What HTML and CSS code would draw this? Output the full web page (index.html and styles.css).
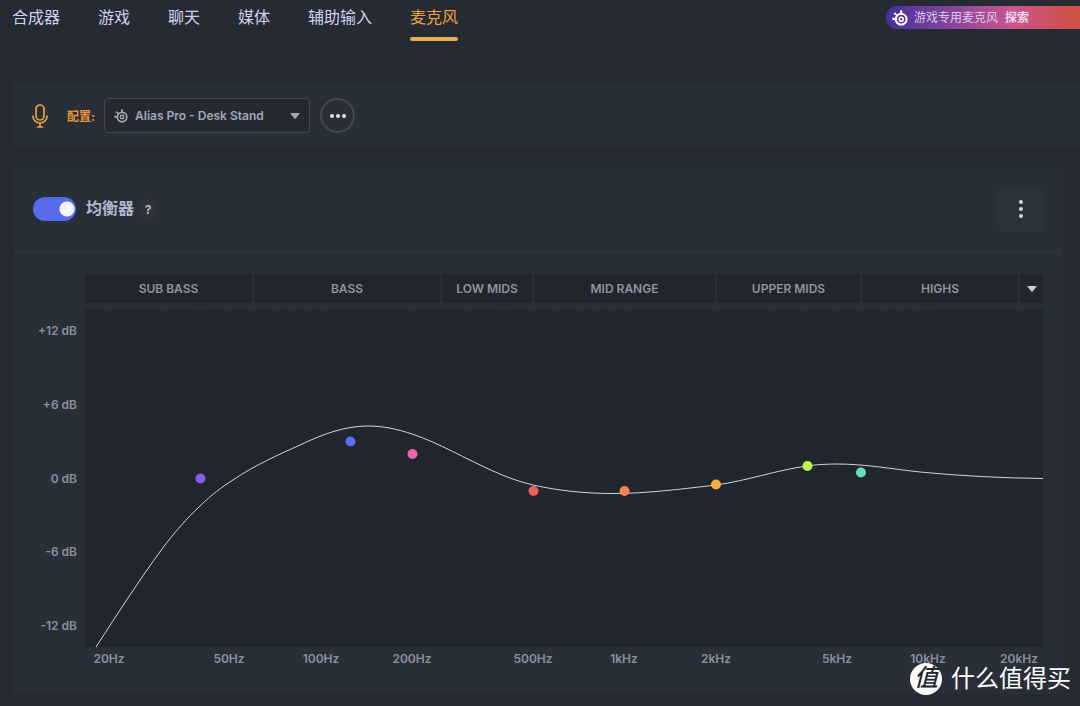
FILE: index.html
```html
<!DOCTYPE html>
<html lang="zh-CN">
<head>
<meta charset="utf-8">
<title>麦克风</title>
<link rel="stylesheet" href="styles.css">
</head>
<body>
<svg class="defs" aria-hidden="true">
  <symbol id="brand" viewBox="0 0 16 16">
    <circle cx="9.200" cy="9.200" r="5.400" fill="none" stroke="currentColor" stroke-width="2"/>
    <circle cx="9.200" cy="9.200" r="2" fill="none" stroke="currentColor" stroke-width="1.600"/>
    <path d="M9.200 4V1.500M5 5.400 3.400 4M4 9.200H1.200" fill="none" stroke="currentColor" stroke-width="1.500" stroke-linecap="round"/>
    <circle cx="9.200" cy="1.500" r="1.200" fill="currentColor"/>
    <circle cx="2.800" cy="3.500" r="1" fill="currentColor"/>
    <circle cx="1.200" cy="8.500" r="1" fill="currentColor"/>
  </symbol>
</svg>

<header class="topbar">
  <nav class="tabs">
    <a class="tab" href="#mixer">合成器</a>
    <a class="tab" href="#game">游戏</a>
    <a class="tab" href="#chat">聊天</a>
    <a class="tab" href="#media">媒体</a>
    <a class="tab" href="#aux">辅助输入</a>
    <a class="tab tab-active" href="#mic" aria-current="page">麦克风</a>
  </nav>
  <a class="promo" href="#explore">
    <svg class="promo-icon" aria-hidden="true"><use href="#brand"/></svg>
    <span>游戏专用麦克风</span>
    <strong>探索</strong>
  </a>
</header>

<section class="profile">
  <svg class="mic" viewBox="0 0 16 24" fill="none" stroke="currentColor" stroke-width="1.700" stroke-linecap="round" aria-hidden="true">
    <rect x="4" y="1" width="8" height="15" rx="4"/>
    <path d="M1 12v.500a7 6.500 0 0 0 14 0V12M8 19v4M5.500 23h5"/>
  </svg>
  <label class="profile-label" for="preset">配置:</label>
  <div class="picker">
    <svg class="picker-icon" aria-hidden="true"><use href="#brand"/></svg>
    <select class="picker-select" id="preset">
      <option>Alias Pro - Desk Stand</option>
    </select>
    <svg class="caret" viewBox="0 0 10 6" aria-hidden="true"><path d="M1 0h8q1 0 .4.800L5.700 5.400q-.7.800-1.400 0L.6.800Q0 0 1 0z" fill="currentColor"/></svg>
  </div>
  <button class="more" type="button" aria-label="更多">
    <svg class="more-dots" viewBox="0 0 16 4" fill="currentColor"><circle cx="2" cy="2" r="2"/><circle cx="8" cy="2" r="2"/><circle cx="14" cy="2" r="2"/></svg>
  </button>
</section>

<main class="card">
  <div class="card-head">
    <input class="switch" type="checkbox" id="eq" checked>
    <label class="card-title" for="eq">均衡器</label>
    <button class="help" type="button" aria-label="帮助">?</button>
    <button class="menu" type="button" aria-label="菜单">
      <svg class="menu-dots" viewBox="0 0 4 18" fill="currentColor"><circle cx="2" cy="2" r="2"/><circle cx="2" cy="9" r="2"/><circle cx="2" cy="16" r="2"/></svg>
    </button>
  </div>
  <div class="card-body">
    <div class="bands">
      <button class="band" type="button">SUB BASS</button>
      <button class="band" type="button">BASS</button>
      <button class="band" type="button">LOW MIDS</button>
      <button class="band" type="button">MID RANGE</button>
      <button class="band" type="button">UPPER MIDS</button>
      <button class="band" type="button">HIGHS</button>
      <button class="band band-toggle" type="button" aria-label="展开">
        <svg class="caret" viewBox="0 0 10 6" aria-hidden="true"><path d="M1 0h8q1 0 .4.800L5.700 5.400q-.7.800-1.400 0L.6.800Q0 0 1 0z" fill="currentColor"/></svg>
      </button>
    </div>
    <svg class="chart" viewBox="-52 0 1010 360" role="img" aria-label="均衡器曲线">
      <rect class="plot" width="958" height="337"/>
      <path class="grid" d="M0 21H958M0 94H958M0 168H958M0 242H958M0 316H958
        M24 0V337M77 0V337M115 0V337M144 0V337M169 0V337M189 0V337M206 0V337M222 0V337M236 0V337
        M327 0V337M381 0V337M419 0V337M448 0V337M472 0V337M492 0V337M510 0V337M526 0V337M540 0V337
        M631 0V337M684 0V337M722 0V337M752 0V337M776 0V337M796 0V337M814 0V337M829 0V337M843 0V337M934 0V337"/>
      <g class="axis axis-y">
        <text x="-8" y="25">+12 dB</text>
        <text x="-8" y="99">+6 dB</text>
        <text x="-8" y="173">0 dB</text>
        <text x="-8" y="246">-6 dB</text>
        <text x="-8" y="320">-12 dB</text>
      </g>
      <g class="axis axis-x">
        <text x="24" y="353">20Hz</text>
        <text x="144" y="353">50Hz</text>
        <text x="236" y="353">100Hz</text>
        <text x="327" y="353">200Hz</text>
        <text x="448" y="353">500Hz</text>
        <text x="539" y="353">1kHz</text>
        <text x="631" y="353">2kHz</text>
        <text x="752" y="353">5kHz</text>
        <text x="843" y="353">10kHz</text>
        <text x="934" y="353">20kHz</text>
      </g>
      <path class="curve" d="M11 337C33 303 55 269 77 239C89 223 102 208 115 196C126 185 137 177 148 170C170 155 193 145 215 135C238 124 260 116 283 116C298 116 312 119 327 124C354 133 381 149 408 161C421 167 435 172 448 175C475 181 501 183.500 528 183.500C562 183.500 597 179 631 175C661 171 692 160 722 156C732 154.500 742 154 752 154C780 154 807 159 835 162C876 166 917 168 958 168.500"/>
      <circle cx="115.500" cy="168.500" r="5" fill="#8a5de8"/>
      <circle cx="265.500" cy="131.500" r="5" fill="#5a6cf0"/>
      <circle cx="327.500" cy="144" r="5" fill="#ef63b1"/>
      <circle cx="448.500" cy="181" r="5" fill="#ec5f5c"/>
      <circle cx="539.500" cy="181" r="5" fill="#f38452"/>
      <circle cx="631" cy="174.500" r="5" fill="#f3ac3f"/>
      <circle cx="722.500" cy="156" r="5" fill="#bdf350"/>
      <circle cx="776" cy="162.500" r="5" fill="#67dcc1"/>
    </svg>
  </div>
</main>

<div class="watermark">
  <span class="watermark-seal">值</span>
  <span>什么值得买</span>
</div>
</body>
</html>
```

FILE: styles.css
```css
* {
  box-sizing: border-box;
}

body {
  margin: 0;
  min-height: 100vh;
  position: relative;
  background: #262a33;
  color: #d0d4e4;
  font-family: Inter, "Noto Sans CJK SC", sans-serif;
  font-size: 12px;
}

button,
select {
  font: inherit;
  color: inherit;
  margin: 0;
  padding: 0;
  border: 0;
  background: none;
}

.defs {
  display: none;
}

.topbar {
  display: flex;
  justify-content: space-between;
  align-items: flex-start;
  padding: 6px 0 0 12px;
}

.tabs {
  display: flex;
  gap: 38px;
}

.tab {
  padding-bottom: 13px;
  color: #cfd3ee;
  font-size: 16px;
  line-height: 23px;
  text-decoration: none;
}

.tab-active {
  padding-bottom: 0;
  color: #e9a241;
}

.tab-active::after {
  content: "";
  display: block;
  height: 4px;
  margin-top: 8px;
  border-radius: 2px;
  background: #e8ae55;
}

.promo {
  display: flex;
  align-items: center;
  width: 194px;
  height: 23px;
  padding-left: 6px;
  border-radius: 12px 0 0 12px;
  background: linear-gradient(90deg, #46309a, #8a469a 35%, #c9578d 65%, #d0504a 95%);
  color: #dcc8f2;
  line-height: 16px;
  text-decoration: none;
}

.promo-icon {
  width: 16px;
  height: 16px;
  margin-right: 6px;
  color: #fff;
}

.promo strong {
  margin-left: 7px;
  color: #ecd4f0;
}

.profile {
  display: flex;
  align-items: center;
  height: 63px;
  margin: 42px 0 20px 13px;
  padding-left: 19px;
  background: #292f38;
}

.mic {
  width: 16px;
  height: 24px;
  color: #e9a241;
}

.profile-label {
  margin: 0 9px 0 19px;
  color: #e9963a;
  font-weight: 700;
}

.picker {
  display: flex;
  align-items: center;
  width: 206px;
  height: 35px;
  padding: 0 9px 0 9px;
  border: 1px solid #414650;
  border-radius: 4px;
  background: #252a32;
  color: #a3a8b6;
}

.picker-icon {
  width: 14px;
  height: 14px;
  margin-right: 7px;
}

.picker-select {
  flex: 1;
  min-width: 0;
  height: 33px;
  appearance: none;
  outline: none;
  font-weight: 600;
}

.caret {
  width: 10px;
  height: 6px;
}

.more {
  display: grid;
  place-items: center;
  width: 35px;
  height: 35px;
  margin-left: 10px;
  border: 2px solid #434751;
  border-radius: 50%;
  color: #e0e3ee;
}

.more-dots {
  width: 16px;
  height: 4px;
}

.card {
  margin: 0 17px 12px 13px;
  background: #292f38;
}

.card-head {
  display: flex;
  align-items: center;
  height: 85px;
  padding: 0 20px;
  border-bottom: 1px solid #30353e;
}

.switch {
  appearance: none;
  width: 43px;
  height: 24px;
  margin: 0 10px 0 0;
  border-radius: 12px;
  background: radial-gradient(circle at 34px 12px, #f2f3fb 7px, transparent 8px), #566bea;
}

.card-title {
  padding-bottom: 4px;
  color: #b3b8cc;
  font-size: 16px;
  font-weight: 700;
}

.help {
  width: 22px;
  height: 22px;
  margin-left: 3px;
  border-radius: 50%;
  background: #2d323a;
  color: #b3b8c6;
  font-weight: 700;
}

.menu {
  display: grid;
  place-items: center;
  width: 45px;
  height: 45px;
  margin-left: auto;
  border-radius: 4px;
  background: #2c323b;
}

.menu-dots {
  width: 4px;
  height: 18px;
}

.card-body {
  padding: 22px 20px 24px;
}

.bands {
  display: grid;
  grid-template-columns: 167fr 186fr 90fr 181fr 143fr 156fr 23px;
  gap: 2px;
  margin: 0 0 7px 52px;
}

.band {
  height: 29px;
  border-radius: 3px;
  background: #21252d;
  color: #8f94a2;
  font-weight: 600;
}

.band-toggle {
  display: grid;
  place-items: center;
  color: #c8ccd8;
}

.chart {
  display: block;
  width: 100%;
}

.plot {
  fill: #21252d;
}

.grid {
  fill: none;
  stroke: #272b34;
}

.axis {
  fill: #8b909e;
  font-size: 12px;
  font-weight: 600;
}

.axis-y {
  text-anchor: end;
}

.axis-x {
  text-anchor: middle;
}

.curve {
  fill: none;
  stroke: #d0d3dc;
}

.watermark {
  position: absolute;
  right: 9px;
  bottom: 9px;
  display: flex;
  align-items: center;
  gap: 9px;
  color: #fff;
  font-size: 24px;
  line-height: 36px;
}

.watermark-seal {
  width: 32px;
  height: 32px;
  border-radius: 50%;
  background: #fff;
  color: #22262e;
  font-style: italic;
  font-weight: 500;
  line-height: 30px;
  text-align: center;
}
```
